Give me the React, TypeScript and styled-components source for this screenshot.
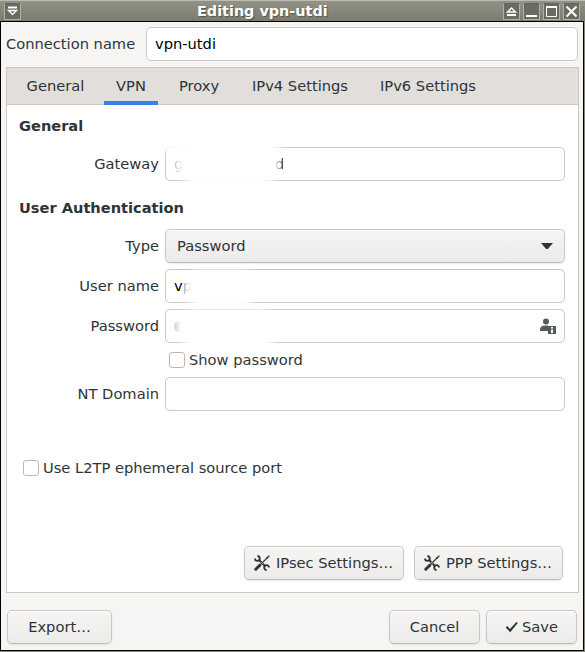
import React from "react";
import styled, { createGlobalStyle } from "styled-components";

const GlobalStyle = createGlobalStyle`
  * { box-sizing: border-box; }
  body { margin: 0; overflow: hidden; }
`;

const Window = styled.main`
  width: 585px;
  height: 652px;
  display: flex;
  flex-direction: column;
  background: #858579;
  font: 14.67px/18px "DejaVu Sans", sans-serif;
  color: #2e3436;
  white-space: nowrap;
`;

const TitleBar = styled.header`
  height: 21px;
  flex: none;
  display: flex;
  align-items: center;
  padding: 1px 5px 0 4px;
  border-top: 1px solid #bcbcb5;
  background: linear-gradient(#929287, #7b7b70);
`;

const Title = styled.h1`
  margin: -2px auto 0 176px;
  font: bold 14.4px/18px "DejaVu Sans", sans-serif;
  color: #fff;
  text-shadow: 1px 1px 1px #55554d;
`;

const TitleButtons = styled.div`
  display: flex;
  gap: 3px;
`;

const TitleButton = styled.button`
  width: 17px;
  height: 17px;
  padding: 0;
  border: 1px solid #b0b0a6;
  border-top-color: #66665e;
  background: #6b6b62;
  svg { display: block; }
`;

const Content = styled.form`
  width: 584px;
  height: 630px;
  flex: none;
  display: flex;
  flex-direction: column;
  background: #f6f5f4;
  border: 1px solid #000;
  padding: 5px 4px 0 5px;
`;

const NameRow = styled.div`
  display: grid;
  grid-template-columns: 128px 1fr;
  align-items: center;
  gap: 12px;
  height: 34px;
  padding-right: 1px;
`;

const Entry = styled.div`
  position: relative;
  height: 34px;
  display: flex;
  align-items: center;
  padding: 0 8px;
  border: 1px solid #cdc7c2;
  border-radius: 5px;
  background: #fff;
  color: #000;
`;

const Notebook = styled.section`
  height: 526px;
  flex: none;
  margin-top: 6px;
  border: 1px solid #cdc7c2;
  background: #fff;
`;

const Tabs = styled.nav`
  height: 37px;
  display: grid;
  grid-template-columns: 81px 54px 66px 120px 120px;
  padding-left: 8px;
  gap: 8px;
  border-bottom: 1px solid #cdc7c2;
  background: #e1dedb;
`;

const Tab = styled.div<{ $active?: boolean }>`
  height: 37px;
  padding-top: 9px;
  display: flex;
  justify-content: center;
  border-bottom: 4px solid ${(p) => (p.$active ? "#3584e4" : "transparent")};
`;

const Page = styled.div`
  padding: 12px 13px 0 12px;
`;

const Heading = styled.h2<{ $second?: boolean }>`
  margin: ${(p) => (p.$second ? "18px 0 12px" : "0 0 12px")};
  font: bold 14.6px/18px "DejaVu Sans", sans-serif;
`;

const FieldGrid = styled.div`
  display: grid;
  grid-template-columns: 140px 400px;
  column-gap: 6px;
  row-gap: 6px;
  align-items: center;
`;

const Label = styled.span`
  text-align: right;
`;

const buttonSurface = `
  border: 1px solid #cdc7c2;
  border-bottom-color: #bfb8b1;
  border-radius: 5px;
  background: linear-gradient(#f6f5f4, #edebe9);
  box-shadow: inset 0 1px #fff, 0 1px 2px rgba(0, 0, 0, 0.08);
`;

const Select = styled.div`
  ${buttonSurface}
  height: 34px;
  display: flex;
  align-items: center;
  justify-content: space-between;
  padding: 0 11px;
`;

const CheckRow = styled.label<{ $field?: boolean }>`
  display: flex;
  align-items: center;
  gap: 4px;
  height: 22px;
  ${(p) => (p.$field ? "grid-column: 2; padding-left: 4px;" : "margin: 46px 0 0 4px;")}
`;

const CheckBox = styled.i`
  width: 16px;
  height: 16px;
  border: 1px solid #bfb8b1;
  border-radius: 3px;
  background: #fff;
`;

const Button = styled.button<{ $width: number }>`
  ${buttonSurface}
  width: ${(p) => p.$width}px;
  height: 34px;
  display: flex;
  align-items: center;
  justify-content: center;
  gap: 3px;
  padding: 0;
  font: inherit;
  color: inherit;
`;

const PluginButton = styled(Button)`
  justify-content: flex-start;
  gap: 6px;
  padding-left: 9px;
`;

const PluginButtons = styled.div`
  display: flex;
  justify-content: flex-end;
  gap: 10px;
  margin: 67px 2px 0 0;
`;

const Footer = styled.footer`
  display: flex;
  gap: 6px;
  padding: 17px 2px 0 1px;
`;

const Spacer = styled.div`
  flex: 1;
`;

/* Soft white patch that hides a private value. */
const Redaction = styled.i<{ $x: number; $y: number; $w: number; $h: number }>`
  position: absolute;
  left: ${(p) => p.$x}px;
  top: ${(p) => p.$y}px;
  width: ${(p) => p.$w}px;
  height: ${(p) => p.$h}px;
  border-radius: 12px;
  background: #fff;
  filter: blur(4px);
`;

const FadedText = styled.span<{ $from: string; $to: string }>`
  position: relative;
  background: linear-gradient(90deg, ${(p) => p.$from}, ${(p) => p.$to});
  background-clip: text;
  color: transparent;
`;

const LastLetter = styled(FadedText)`
  position: absolute;
  left: 109px;
`;

const Dot = styled.i`
  width: 11px;
  height: 11px;
  border-radius: 50%;
  background: linear-gradient(90deg, #ccc, #fff 70%);
`;

const EntryIcon = styled.svg`
  margin-left: auto;
`;

const Tools = () => (
  <svg width="16" height="16" viewBox="0 0 16 16" fill="none" stroke="#2e3436">
    <path d="M1.8 14.2 5.8 10.2" strokeWidth="3" strokeLinecap="round" />
    <path d="M6.5 9.5 13.5 2.5" strokeWidth="1.1" />
    <path d="M12 2.8 15 .2 15.8 1 13.2 4Z" fill="#2e3436" stroke="none" />
    <path d="M4.5 4.5 7.3 7.3M8.6 8.6 11.5 11.5" strokeWidth="2" />
    <path d="M3.4 1A2.4 2.4 0 1 1 1 3.4" strokeWidth="1.8" />
    <path d="M12.6 15A2.4 2.4 0 1 1 15 12.6" strokeWidth="1.8" />
  </svg>
);

const Check = () => (
  <svg width="14" height="12" viewBox="0 0 14 12" fill="#2e3436">
    <path d="M.7 6.6 2.3 5.1 5 8.1 11.3.9 12.8 2 5.2 11.2Z" />
  </svg>
);

export default function App() {
  return (
    <Window>
      <GlobalStyle />
      <TitleBar>
        <TitleButtons>
          <TitleButton type="button" aria-label="Menu">
            <svg width="15" height="15" fill="none" stroke="#fff">
              <path d="M3 3.5h9" strokeWidth="2" />
              <path d="M3.5 6.5h8l-4 4Z" strokeWidth="1.4" />
            </svg>
          </TitleButton>
        </TitleButtons>
        <Title>Editing vpn-utdi</Title>
        <TitleButtons>
          <TitleButton type="button" aria-label="Shade">
            <svg width="15" height="15" fill="none" stroke="#fff">
              <path d="M3.5 8h8l-4-4Z" strokeWidth="1.4" />
              <path d="M3 11h9" strokeWidth="2" />
            </svg>
          </TitleButton>
          <TitleButton type="button" aria-label="Minimize">
            <svg width="15" height="15"><path d="M2 12h11" stroke="#fff" strokeWidth="2" /></svg>
          </TitleButton>
          <TitleButton type="button" aria-label="Maximize">
            <svg width="15" height="15" fill="none" stroke="#fff">
              <path d="M2.5 2.5h10v10h-10Z" />
              <path d="M2 3h11" strokeWidth="2" />
            </svg>
          </TitleButton>
          <TitleButton type="button" aria-label="Close">
            <svg width="15" height="15"><path d="m2.5 2.5 10 10m0-10-10 10" stroke="#fff" strokeWidth="2" /></svg>
          </TitleButton>
        </TitleButtons>
      </TitleBar>
      <Content>
        <NameRow>
          <span>Connection name</span>
          <Entry>vpn-utdi</Entry>
        </NameRow>
        <Notebook>
          <Tabs>
            <Tab>General</Tab>
            <Tab $active>VPN</Tab>
            <Tab>Proxy</Tab>
            <Tab>IPv4 Settings</Tab>
            <Tab>IPv6 Settings</Tab>
          </Tabs>
          <Page>
            <Heading>General</Heading>
            <FieldGrid>
              <Label>Gateway</Label>
              <Entry>
                <Redaction $x={16} $y={-8} $w={94} $h={46} />
                <Redaction $x={-6} $y={-14} $w={122} $h={18} />
                <FadedText $from="#bbb" $to="#fff">g</FadedText>
                <LastLetter $from="#fff" $to="#222">d</LastLetter>
              </Entry>
            </FieldGrid>
            <Heading $second>User Authentication</Heading>
            <FieldGrid>
              <Label>Type</Label>
              <Select>
                Password
                <svg width="12" height="6"><path d="M0 0h12L6.8 6H5.2Z" fill="#2e3436" /></svg>
              </Select>
              <Label>User name</Label>
              <Entry>
                <Redaction $x={24} $y={0} $w={62} $h={40} />
                v<FadedText $from="#aaa" $to="#fff">p</FadedText>
              </Entry>
              <Label>Password</Label>
              <Entry>
                <Redaction $x={16} $y={-1} $w={92} $h={42} />
                <Dot />
                <EntryIcon width="17" height="17" viewBox="0 0 17 17" fill="#555a5a">
                  <circle cx="7" cy="3.5" r="3" />
                  <path d="M1 13v-1.5C1 8.9 3 7.5 6 7.5h3V13Z" />
                  <path d="M9 8h8v8H9Z" />
                  <path d="M12 9h2v1.5h-2ZM12 11.5h2V15h-2Z" fill="#fff" />
                </EntryIcon>
              </Entry>
              <CheckRow $field>
                <CheckBox />
                Show password
              </CheckRow>
              <Label>NT Domain</Label>
              <Entry />
            </FieldGrid>
            <CheckRow>
              <CheckBox />
              Use L2TP ephemeral source port
            </CheckRow>
            <PluginButtons>
              <PluginButton type="button" $width={160}><Tools />IPsec Settings…</PluginButton>
              <PluginButton type="button" $width={149}><Tools />PPP Settings…</PluginButton>
            </PluginButtons>
          </Page>
        </Notebook>
        <Footer>
          <Button type="button" $width={105}>Export…</Button>
          <Spacer />
          <Button type="button" $width={91}>Cancel</Button>
          <Button type="button" $width={91}><Check />Save</Button>
        </Footer>
      </Content>
    </Window>
  );
}
